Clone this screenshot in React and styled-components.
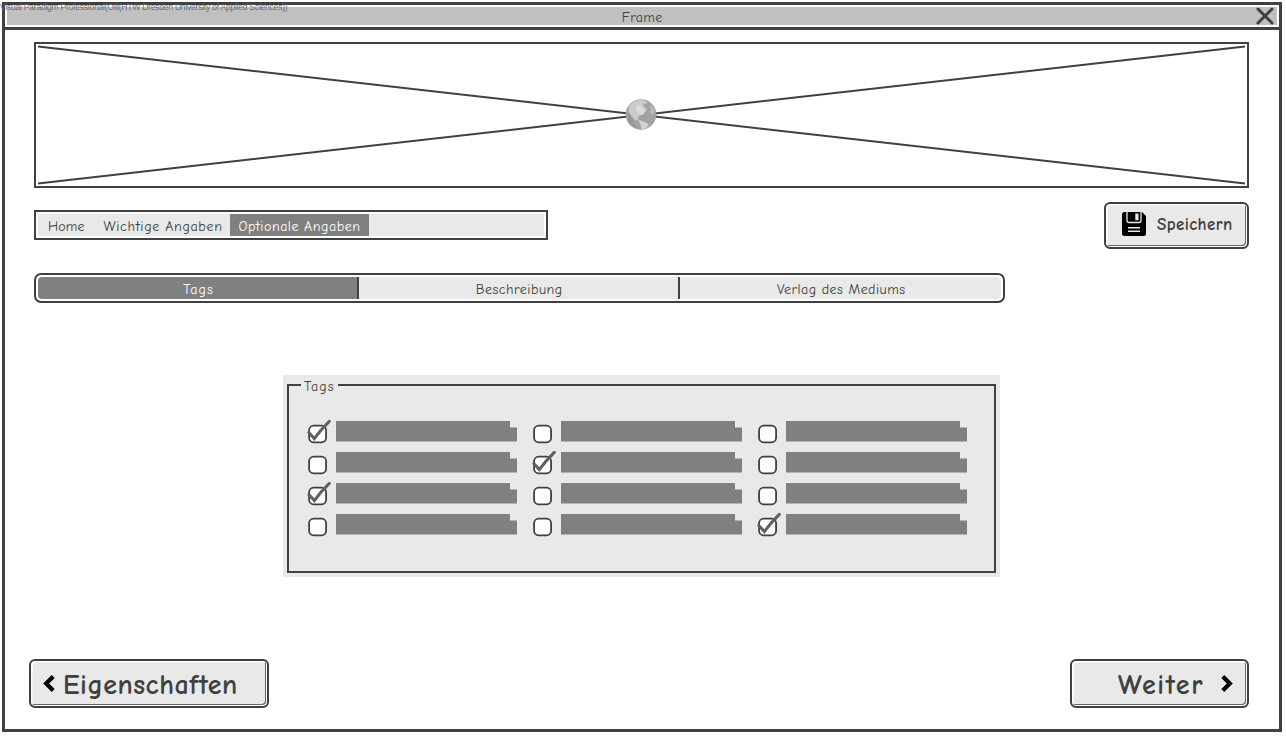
import React from "react";
import styled, { createGlobalStyle } from "styled-components";

const INK = "#404040";
const FILL = "#e9e9e9";
const ACTIVE = "#808080";

const GlobalStyle = createGlobalStyle`
  *, *::before, *::after { box-sizing: border-box; }
  body {
    margin: 0;
    background: #fff;
    color: ${INK};
    font-family: "Comic Sans MS", "Comic Neue", Lato, sans-serif;
    font-size: 14px;
    font-variant-ligatures: none;
    overflow: hidden;
  }
  button { font: inherit; color: inherit; }
`;

const Page = styled.div`
  position: relative;
  width: 1286px;
  height: 736px;
  padding: 2px;
`;

const Watermark = styled.div`
  position: absolute;
  left: 0;
  top: 2px;
  font: 8.5px/11px "Liberation Sans", Arial, sans-serif;
  letter-spacing: -0.22px;
  color: #6c6c6c;
  white-space: nowrap;
`;

const Window = styled.div`
  display: flex;
  flex-direction: column;
  width: 1280px;
  height: 730px;
  border: 3px solid ${INK};
`;

const TitleBar = styled.header`
  flex: none;
  height: 25px;
  padding: 2px;
  border-bottom: 3px solid ${INK};
`;

const TitleFill = styled.div`
  display: grid;
  grid-template-columns: 24px 1fr 24px;
  grid-template-rows: 18px;
  align-items: start;
  justify-items: center;
  height: 18px;
  background: #c0c0c0;
`;

const Text = styled.span`
  display: block;
  white-space: nowrap;
  line-height: 18px;
  letter-spacing: ${(p) => p.$track || 0}px;
  margin-right: ${(p) => -(p.$track || 0)}px;
  padding-top: ${(p) => p.$drop || 0}px;
`;

const CloseIcon = styled.svg`
  display: block;
  width: 20px;
  height: 18px;
`;

const Content = styled.main`
  flex: 1;
  display: flex;
  flex-direction: column;
  padding: 12px 30px 21px 29px;
`;

const Banner = styled.div`
  flex: none;
  height: 146px;
  border: 2px solid ${INK};
  svg { display: block; }
`;

const Toolbar = styled.div`
  display: flex;
  justify-content: space-between;
  align-items: flex-start;
  margin-top: 14px;
`;

const Breadcrumb = styled.nav`
  display: flex;
  width: 514px;
  height: 30px;
  margin-top: 8px;
  padding: 2px;
  border: 2px solid ${INK};
  background: ${FILL} content-box;
`;

const Crumb = styled.a`
  display: flex;
  align-items: center;
  width: ${(p) => p.$width}px;
  height: 22px;
  padding: 3px 0 0 ${(p) => p.$pad}px;
  background: ${(p) => (p.$active ? ACTIVE : "transparent")};
  color: ${(p) => (p.$active ? "#fff" : INK)};
`;

const Button = styled.button`
  display: flex;
  align-items: center;
  width: ${(p) => p.$width}px;
  height: ${(p) => p.$height}px;
  padding: 0 ${(p) => p.$padRight || 0}px ${(p) => p.$lift || 0}px ${(p) => p.$pad}px;
  border: 2px solid ${INK};
  border-radius: 6px;
  background: ${FILL};
  box-shadow: inset 2px 2px 0 -0.5px #fff, inset -1px -1px 0 #fff, inset -2px -2px 0 #666;
  font-weight: 700;
  font-size: ${(p) => p.$size}px;
  svg { display: block; flex: none; margin-right: ${(p) => p.$gap || 0}px; }
  svg:last-child { margin: 0 0 0 auto; }
`;

const Tabs = styled.div`
  display: flex;
  width: 971px;
  height: 30px;
  margin-top: 24px;
  padding: 2px;
  border: 2px solid ${INK};
  border-radius: 7px;
`;

const Tab = styled.div`
  display: flex;
  justify-content: center;
  align-items: center;
  width: ${(p) => p.$width}px;
  padding: 3px 0 0 1px;
  background: ${(p) => (p.$active ? ACTIVE : FILL)};
  color: ${(p) => (p.$active ? "#fff" : INK)};
  & + & { border-left: 2px solid ${INK}; }
  &:first-child { border-radius: 4px 0 0 4px; }
  &:last-child { border-radius: 0 4px 4px 0; }
`;

const Panel = styled.section`
  width: 717px;
  height: 202px;
  margin: 72px 0 0 249px;
  padding: 0 4px 4px;
  background: ${FILL};
`;

const Group = styled.fieldset`
  height: 198px;
  margin: 0;
  min-width: 0;
  padding: 0 0 0 19px;
  border: 2px solid ${INK};
`;

const Legend = styled.legend`
  height: 20px;
  width: 37px;
  padding: 2px 0 0 3px;
  margin-left: -7px;
`;

const TagGrid = styled.div`
  display: grid;
  grid-template-columns: repeat(3, 225px);
  grid-auto-rows: 31px;
  padding-top: 25px;
`;

const TagItem = styled.div`
  display: flex;
  align-items: flex-start;
  svg { display: block; flex: none; overflow: visible; }
`;

const TagBar = styled.div`
  width: 181px;
  height: 21px;
  margin: 1px 0 0 9px;
  background: ${ACTIVE};
  clip-path: polygon(0 0, 174px 0, 174px 6.5px, 100% 6.5px, 100% 20.6px, 0 20.6px);
`;

const Footer = styled.footer`
  display: flex;
  justify-content: space-between;
  margin: auto 0 0 -5px;
`;

const Checkbox = ({ checked }) => (
  <svg width="19" height="24" viewBox="0 0 19 24">
    <rect x="1.1" y="5.7" width="17" height="16.6" rx="4.5" fill="#fff" stroke={INK} strokeWidth="1.8" />
    {checked && (
      <path d="M.8 12.5 6.3 18.600C10.500 12.900 15.500 7.100 21.300 1.400" fill="none" stroke="#606060" strokeWidth="3" strokeLinecap="round" />
    )}
  </svg>
);

const Globe = () => (
  <g transform="translate(589.5 55.5)">
    <circle cx="15.5" cy="15" r="15.3" fill="#a2a2a2" />
    <path d="M3.500 7C7 2 12 0 17 .4l5 2-1.500 2.200-3-.5 1.200 3.400 3 2.200-1.800 3-3-1.500-.4 4-3.300 1.200-1 4.800-4-1.800-3.400-5L3 12Z" fill="#cbcbcb" />
    <path d="m10 7 5-.5 4 3-.5 5-3 1-4-3Z" fill="#dcdcdc" />
    <path d="m13 20 5.500 2.200 4.800 2.200-2.500 4.600-4.200 1-2-5.500Z" fill="#d0d0d0" />
    <path d="m24 6.500 3.300.5 2 5-2 4-2.700-3.400 1-2.600Z" fill="#bcbcbc" />
    <path d="m3 14 4 5 1 5 3 4C5 26 2 22 2 17Z" fill="#949494" />
  </g>
);

const SaveIcon = () => (
  <svg width="24" height="24" viewBox="0 0 24 24">
    <path d="M2.500 0H20l4 4v17.500a2.500 2.500 0 0 1-2.500 2.500h-19A2.500 2.500 0 0 1 0 21.500V2.500A2.500 2.500 0 0 1 2.500 0Z" fill="#000" />
    <path d="M5 0v8.500q0 2 2 2h10q2 0 2-2V0" fill="none" stroke={FILL} strokeWidth="1.300" />
    <path d="M13.300 1.500h3.200v6.800h-3.200zM6 15h12v1.500H6zM6 18.600h12v1.500H6z" fill={FILL} />
  </svg>
);

const Chevron = ({ right }) => (
  <svg width="12" height="18" viewBox="0 0 12 18">
    <path d={right ? "m1.800 1.500 7 7-7 7" : "m10.200 1.500-7 7 7 7"} fill="none" stroke="#000" strokeWidth="4.200" />
  </svg>
);

const CHECKED = [0, 4, 6, 11];

export default function App() {
  return (
    <Page>
      <GlobalStyle />
      <Window>
        <TitleBar>
          <TitleFill>
            <span />
            <Text $track={0.3} $drop={2}>Frame</Text>
            <CloseIcon viewBox="0 0 20 18">
              <path d="m3 2 14 14M17 2 3 16" stroke={INK} strokeWidth="3" strokeLinecap="round" />
            </CloseIcon>
          </TitleFill>
        </TitleBar>
        <Content>
          <Banner>
            <svg width="1211" height="142" viewBox="0 0 1211 142">
              <path d="M2 2.500 1209 139.500M2 139.500 1209 2.500" stroke={INK} strokeWidth="2" />
              <Globe />
            </svg>
          </Banner>
          <Toolbar>
            <Breadcrumb>
              <Crumb $width={56} $pad={10}><Text $track={0.1}>Home</Text></Crumb>
              <Crumb $width={136} $pad={9.5}><Text $track={0.65}>Wichtige Angaben</Text></Crumb>
              <Crumb $width={139} $pad={8.5} $active><Text $track={0.5}>Optionale Angaben</Text></Crumb>
            </Breadcrumb>
            <Button $width={145} $height={47} $pad={16} $padRight={5} $lift={4} $gap={11} $size={17}>
              <SaveIcon />
              <Text $track={0.4} $drop={2}>Speichern</Text>
            </Button>
          </Toolbar>
          <Tabs>
            <Tab $width={319} $active><Text $track={1}>Tags</Text></Tab>
            <Tab $width={321}><Text $track={0.5}>Beschreibung</Text></Tab>
            <Tab $width={323}><Text $track={0.45}>Verlag des Mediums</Text></Tab>
          </Tabs>
          <Panel>
            <Group>
              <Legend><Text $track={1} $drop={1}>Tags</Text></Legend>
              <TagGrid>
                {Array.from({ length: 12 }, (_, i) => (
                  <TagItem key={i}>
                    <Checkbox checked={CHECKED.includes(i)} />
                    <TagBar />
                  </TagItem>
                ))}
              </TagGrid>
            </Group>
          </Panel>
          <Footer>
            <Button $width={240} $height={49} $pad={12} $gap={8} $size={28}>
              <Chevron />
              <Text $track={0.5} $drop={2}>Eigenschaften</Text>
            </Button>
            <Button $width={179} $height={49} $pad={46} $padRight={14} $size={28}>
              <Text $track={1.6} $drop={2}>Weiter</Text>
              <Chevron right />
            </Button>
          </Footer>
        </Content>
      </Window>
      <Watermark>Visual Paradigm Professional(Olli(HTW Dresden University of Applied Sciences))</Watermark>
    </Page>
  );
}
